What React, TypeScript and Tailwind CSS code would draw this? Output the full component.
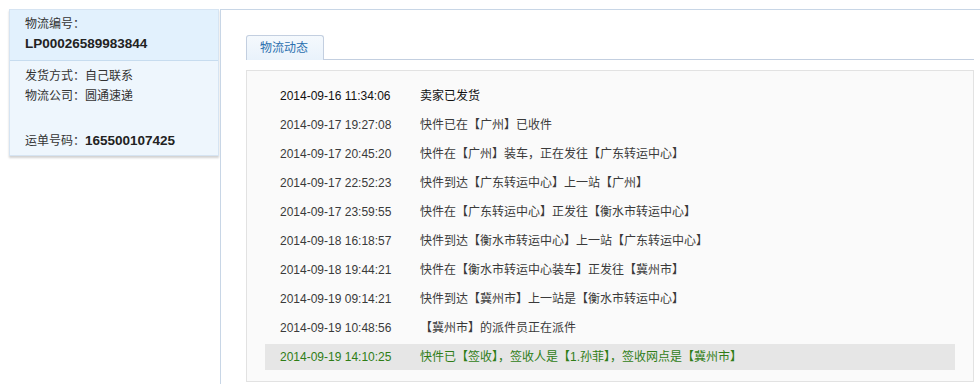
const rows = [
  { time: '2014-09-16 11:34:06', text: '卖家已发货' },
  { time: '2014-09-17 19:27:08', text: '快件已在【广州】已收件' },
  { time: '2014-09-17 20:45:20', text: '快件在【广州】装车，正在发往【广东转运中心】' },
  { time: '2014-09-17 22:52:23', text: '快件到达【广东转运中心】上一站【广州】' },
  { time: '2014-09-17 23:59:55', text: '快件在【广东转运中心】正发往【衡水市转运中心】' },
  { time: '2014-09-18 16:18:57', text: '快件到达【衡水市转运中心】上一站【广东转运中心】' },
  { time: '2014-09-18 19:44:21', text: '快件在【衡水市转运中心装车】正发往【冀州市】' },
  { time: '2014-09-19 09:14:21', text: '快件到达【冀州市】上一站是【衡水市转运中心】' },
  { time: '2014-09-19 10:48:56', text: '【冀州市】的派件员正在派件' },
  { time: '2014-09-19 14:10:25', text: '快件已【签收】，签收人是【1.孙菲】，签收网点是【冀州市】' },
];

const cjk = "font-['Liberation_Sans','Noto_Sans_CJK_SC',sans-serif]";

export default function App() {
  return (
    <div className={`flex w-[980px] h-[384px] bg-white overflow-hidden text-[12px] text-[#333] ${cjk}`}>
      {/* Left info panel */}
      <div className="w-[220px] shrink-0 pt-[9px] pl-[9px]">
        <div className="w-[210px] border border-[#d6e4f2] bg-[#eef6fd] shadow-[0_2px_2px_rgba(0,0,0,0.18)]">
          <div className="bg-[#e2f1fd] border-b border-[#c7dcef] pl-[15px] pt-[4px] pb-[6px] leading-[20px]">
            <div>物流编号：</div>
            <div className="font-bold text-[13.5px] text-[#222]">LP00026589983844</div>
          </div>
          <div className="pl-[15px] pt-[5px] pb-[4px] leading-[20px]">
            <div>发货方式：自己联系</div>
            <div>物流公司：圆通速递</div>
            <div className="mt-[25px]">
              运单号码：<span className="font-bold text-[13.5px] text-[#222]">165500107425</span>
            </div>
          </div>
        </div>
      </div>

      {/* Right content */}
      <div className="flex-1 mt-[9px] border-t border-l border-[#c8d6e6] pl-[25px] pr-[8px] pt-[25px]">
        <div className="flex border-b border-[#c3cfe0] h-[25px]">
          <div className="w-[78px] h-[25px] -mb-px rounded-t-[3px] border border-b-0 border-[#c3cfe0] bg-gradient-to-b from-[#f5f9fd] to-[#e9f2fb] text-[#2b6fae] flex items-center pl-[13px]">
            物流动态
          </div>
        </div>
        <div className="mt-[10px] w-[728px] h-[312px] border border-[#e2e2e2] bg-[#fafafa] pt-[12px] pl-[18px] pr-[18px]">
          {rows.map((r, i) => {
            const last = i === rows.length - 1;
            const first = i === 0;
            return (
              <div
                key={i}
                className={`flex items-center h-[26px] mb-[3px] pl-[15px] ${last ? 'bg-[#e6e6e6] text-[#2f7d16]' : first ? 'text-[#111]' : 'text-[#3a3a3a]'}`}
              >
                <span className="w-[140px] shrink-0">{r.time}</span>
                <span>{r.text}</span>
              </div>
            );
          })}
        </div>
      </div>
    </div>
  );
}
